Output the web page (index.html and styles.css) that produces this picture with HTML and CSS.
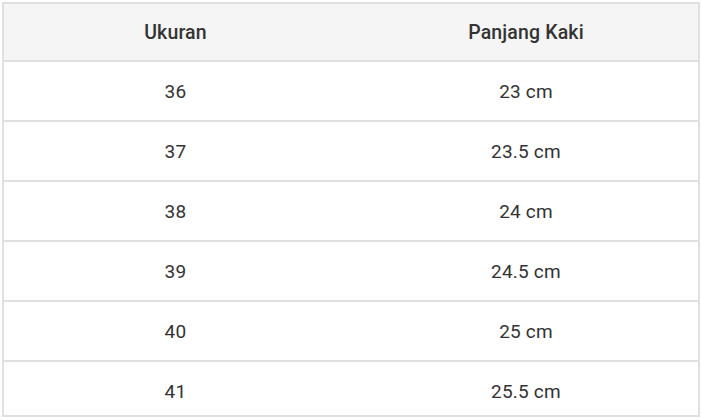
FILE: index.html
```html
<!DOCTYPE html>
<html>
<head>
<meta charset="utf-8">
<link rel="stylesheet" href="styles.css">
</head>
<body>
<div class="wrap">
  <table class="size-table">
    <thead>
      <tr><th>Ukuran</th><th>Panjang Kaki</th></tr>
    </thead>
    <tbody>
      <tr><td>36</td><td>23 cm</td></tr>
      <tr><td>37</td><td>23.5 cm</td></tr>
      <tr><td>38</td><td>24 cm</td></tr>
      <tr><td>39</td><td>24.5 cm</td></tr>
      <tr><td>40</td><td>25 cm</td></tr>
      <tr><td>41</td><td>25.5 cm</td></tr>
    </tbody>
  </table>
</div>
</body>
</html>
```
FILE: styles.css
```css
html, body {
  margin: 0;
  padding: 0;
  background: #fff;
}
body {
  font-family: Roboto, "Noto Sans", sans-serif;
  color: #333;
}
.wrap {
  margin: 2px 2px 0 2px;
  width: 694px;
  height: 411px;
  border: 2px solid #e0e0e0;
  overflow: hidden;
}
.size-table {
  width: 100%;
  border-collapse: collapse;
  table-layout: fixed;
}
.size-table th,
.size-table td {
  text-align: center;
  padding: 0;
}
.size-table th {
  background: #f5f5f5;
  font-weight: 500;
  font-size: 19.5px;
  letter-spacing: 0.15px;
  height: 56px;
  border-bottom: 2px solid #e0e0e0;
}
.size-table th:first-child,
.size-table td:first-child {
  padding-right: 4px;
}
.size-table th:last-child,
.size-table td:last-child {
  padding-left: 3px;
}
.size-table td {
  height: 58px;
  font-size: 19px;
  letter-spacing: 0.2px;
  border-bottom: 2px solid #e0e0e0;
  font-weight: 400;
}
```
